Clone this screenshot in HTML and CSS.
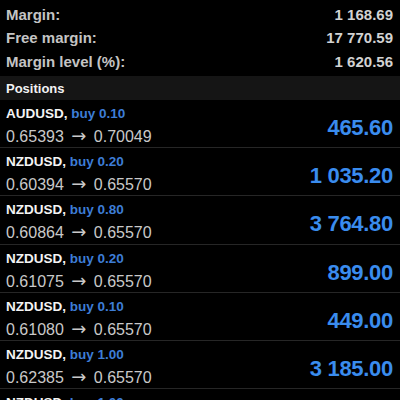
FILE: index.html
```html
<!DOCTYPE html>
<html lang="en">
<head>
    <meta charset="UTF-8">
    <meta name="viewport" content="width=device-width, initial-scale=1.0">
    <title>Trade</title>
    <link rel="stylesheet" href="styles.css">
</head>
<body>
    <div class="screen">
        <div class="summary">
            <div class="summary-row"><span>Equity:</span><span>18 939.28</span></div>
            <div class="summary-row"><span>Margin:</span><span>1 168.69</span></div>
            <div class="summary-row"><span>Free margin:</span><span>17 770.59</span></div>
            <div class="summary-row"><span>Margin level (%):</span><span>1 620.56</span></div>
        </div>

        <div class="section-title">Positions</div>

        <div class="positions">
            <div class="position">
                <div class="info">
                    <div class="symbol">AUDUSD, <span class="side">buy 0.10</span></div>
                    <div class="prices">0.65393 <span class="arrow">→</span> 0.70049</div>
                </div>
                <div class="profit">465.60</div>
            </div>
            <div class="position">
                <div class="info">
                    <div class="symbol">NZDUSD, <span class="side">buy 0.20</span></div>
                    <div class="prices">0.60394 <span class="arrow">→</span> 0.65570</div>
                </div>
                <div class="profit">1 035.20</div>
            </div>
            <div class="position">
                <div class="info">
                    <div class="symbol">NZDUSD, <span class="side">buy 0.80</span></div>
                    <div class="prices">0.60864 <span class="arrow">→</span> 0.65570</div>
                </div>
                <div class="profit">3 764.80</div>
            </div>
            <div class="position">
                <div class="info">
                    <div class="symbol">NZDUSD, <span class="side">buy 0.20</span></div>
                    <div class="prices">0.61075 <span class="arrow">→</span> 0.65570</div>
                </div>
                <div class="profit">899.00</div>
            </div>
            <div class="position">
                <div class="info">
                    <div class="symbol">NZDUSD, <span class="side">buy 0.10</span></div>
                    <div class="prices">0.61080 <span class="arrow">→</span> 0.65570</div>
                </div>
                <div class="profit">449.00</div>
            </div>
            <div class="position">
                <div class="info">
                    <div class="symbol">NZDUSD, <span class="side">buy 1.00</span></div>
                    <div class="prices">0.62385 <span class="arrow">→</span> 0.65570</div>
                </div>
                <div class="profit">3 185.00</div>
            </div>
            <div class="position">
                <div class="info">
                    <div class="symbol">NZDUSD, <span class="side">buy 1.00</span></div>
                    <div class="prices">0.62410 <span class="arrow">→</span> 0.65570</div>
                </div>
                <div class="profit">3 160.00</div>
            </div>
        </div>
    </div>
</body>
</html>
```

FILE: styles.css
```css
body {
    margin: 0;
    padding: 0;
    background-color: #000;
    font-family: "Liberation Sans", Arial, sans-serif;
    overflow: hidden;
}

.screen {
    width: 400px;
    height: 400px;
    overflow: hidden;
}

.summary {
    margin-top: -21px;
    padding: 0 7px 0 6px;
}

.summary-row {
    display: flex;
    justify-content: space-between;
    height: 23.5px;
    line-height: 23px;
    font-size: 15px;
    font-weight: bold;
    color: #c4c4c4;
}

.summary-row span:last-child {
    color: #d2d2d2;
}

.section-title {
    margin-top: 3px;
    height: 24px;
    line-height: 25px;
    padding-left: 6px;
    background-color: #151515;
    color: #f2f2f2;
    font-size: 13px;
    font-weight: bold;
}

.position {
    display: flex;
    justify-content: space-between;
    align-items: flex-start;
    height: 47.2px;
    padding: 0 7px 0 6px;
    border-bottom: 1px solid #262626;
}

.info {
    padding-top: 6px;
}

.symbol {
    line-height: 16px;
    font-size: 13.5px;
    font-weight: bold;
    color: #f4f4f4;
}

.side {
    color: #3d7dd6;
}

.prices {
    margin-top: 5px;
    line-height: 20px;
    font-size: 16px;
    color: #c9c9c9;
}

.arrow {
    margin: 0 3px;
    font-family: "DejaVu Sans", sans-serif;
    font-size: 18px;
    line-height: 1;
}

.profit {
    padding-top: 15px;
    line-height: 26px;
    font-size: 22px;
    font-weight: bold;
    letter-spacing: -0.3px;
    color: #3a8cee;
}
```
